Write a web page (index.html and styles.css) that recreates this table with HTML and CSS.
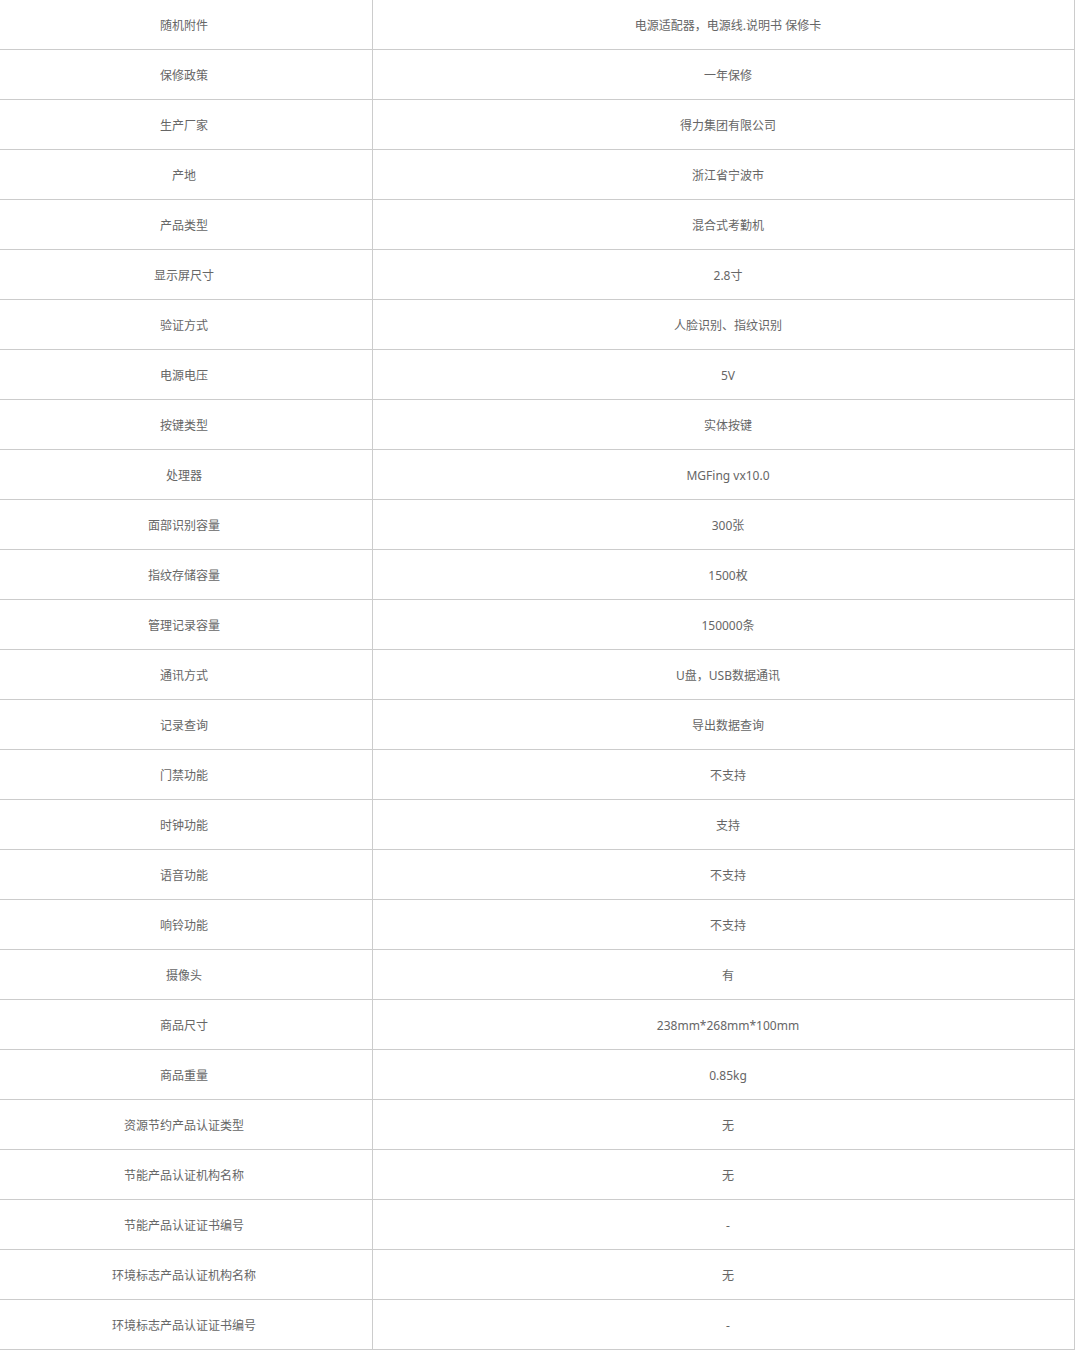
FILE: index.html
```html
<!DOCTYPE html>
<html lang="zh">
<head>
<meta charset="utf-8">
<link rel="stylesheet" href="styles.css">
</head>
<body>
<div class="spec">
<div class="row"><div class="k">随机附件</div><div class="v">电源适配器，电源线.说明书 保修卡</div></div>
<div class="row"><div class="k">保修政策</div><div class="v">一年保修</div></div>
<div class="row"><div class="k">生产厂家</div><div class="v">得力集团有限公司</div></div>
<div class="row"><div class="k">产地</div><div class="v">浙江省宁波市</div></div>
<div class="row"><div class="k">产品类型</div><div class="v">混合式考勤机</div></div>
<div class="row"><div class="k">显示屏尺寸</div><div class="v">2.8寸</div></div>
<div class="row"><div class="k">验证方式</div><div class="v">人脸识别、指纹识别</div></div>
<div class="row"><div class="k">电源电压</div><div class="v">5V</div></div>
<div class="row"><div class="k">按键类型</div><div class="v">实体按键</div></div>
<div class="row"><div class="k">处理器</div><div class="v">MGFing vx10.0</div></div>
<div class="row"><div class="k">面部识别容量</div><div class="v">300张</div></div>
<div class="row"><div class="k">指纹存储容量</div><div class="v">1500枚</div></div>
<div class="row"><div class="k">管理记录容量</div><div class="v">150000条</div></div>
<div class="row"><div class="k">通讯方式</div><div class="v">U盘，USB数据通讯</div></div>
<div class="row"><div class="k">记录查询</div><div class="v">导出数据查询</div></div>
<div class="row"><div class="k">门禁功能</div><div class="v">不支持</div></div>
<div class="row"><div class="k">时钟功能</div><div class="v">支持</div></div>
<div class="row"><div class="k">语音功能</div><div class="v">不支持</div></div>
<div class="row"><div class="k">响铃功能</div><div class="v">不支持</div></div>
<div class="row"><div class="k">摄像头</div><div class="v">有</div></div>
<div class="row"><div class="k">商品尺寸</div><div class="v">238mm*268mm*100mm</div></div>
<div class="row"><div class="k">商品重量</div><div class="v">0.85kg</div></div>
<div class="row"><div class="k">资源节约产品认证类型</div><div class="v">无</div></div>
<div class="row"><div class="k">节能产品认证机构名称</div><div class="v">无</div></div>
<div class="row"><div class="k">节能产品认证证书编号</div><div class="v">-</div></div>
<div class="row"><div class="k">环境标志产品认证机构名称</div><div class="v">无</div></div>
<div class="row"><div class="k">环境标志产品认证证书编号</div><div class="v">-</div></div>
</div>
</body>
</html>
```
FILE: styles.css
```css
html, body {
  margin: 0;
  padding: 0;
  background: #fff;
}
.spec {
  width: 1075px;
  font-family: "Noto Sans", "Noto Sans CJK SC", sans-serif;
  font-size: 12px;
  color: #666;
}
.row {
  display: grid;
  grid-template-columns: 373px 702px;
  height: 50px;
  box-sizing: border-box;
  border-bottom: 1px solid #ccc;
}
.k, .v {
  display: flex;
  align-items: center;
  justify-content: center;
  border-right: 1px solid #ccc;
  box-sizing: border-box;
  line-height: 1;
  padding-top: 2px;
}
.k {
  padding-right: 4px;
}
.v {
  padding-left: 9px;
}
```
